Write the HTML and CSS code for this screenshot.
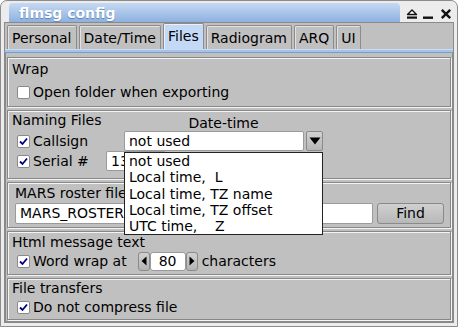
FILE: index.html
```html
<!DOCTYPE html>
<html lang="en">
<head>
    <meta charset="UTF-8">
    <title>flmsg config</title>
    <link rel="stylesheet" href="styles.css">
</head>
<body>
    <div class="window">
        <div class="titlebar">
            <div class="title">flmsg config</div>
            <svg class="wm-btn wm-shade" width="12" height="12" viewBox="0 0 12 12">
                <path d="M1.5 6.5 L6 2 L10.5 6.5 Z" fill="#fff" stroke="#111" stroke-width="1.4" stroke-linejoin="round"/>
                <rect x="1" y="8.5" width="10" height="2.2" fill="#111"/>
            </svg>
            <svg class="wm-btn wm-min" width="12" height="12" viewBox="0 0 12 12">
                <rect x="1" y="8.5" width="10" height="2.4" fill="#111"/>
            </svg>
            <svg class="wm-btn wm-close" width="12" height="12" viewBox="0 0 12 12">
                <path d="M1.8 1.8 L10.2 10.2 M10.2 1.8 L1.8 10.2" stroke="#111" stroke-width="2.4"/>
            </svg>
        </div>

        <div class="client">
            <div class="tabs">
                <div class="tab">Personal</div>
                <div class="tab">Date/Time</div>
                <div class="tab active">Files</div>
                <div class="tab">Radiogram</div>
                <div class="tab">ARQ</div>
                <div class="tab">UI</div>
            </div>
            <div class="tab-rule"></div>

            <div class="panel">
                <div class="group g-wrap">
                    <div class="legend">Wrap</div>
                    <div class="check-row">
                        <span class="box"></span>Open folder when exporting
                    </div>
                </div>

                <div class="group g-naming">
                    <div class="nf-left">
                        <div class="legend">Naming Files</div>
                        <div class="check-row nf-row">
                            <span class="box checked"><svg width="11" height="11" viewBox="0 0 11 11"><path d="M2 5.5 L4.5 8 L9 2.5" fill="none" stroke="#000080" stroke-width="1.8"/></svg></span>Callsign
                        </div>
                        <div class="check-row nf-row">
                            <span class="box checked"><svg width="11" height="11" viewBox="0 0 11 11"><path d="M2 5.5 L4.5 8 L9 2.5" fill="none" stroke="#000080" stroke-width="1.8"/></svg></span><span class="serial-label">Serial #</span>
                            <div class="field serial">13</div>
                        </div>
                    </div>
                    <div class="nf-right">
                        <div class="dt-label">Date-time</div>
                        <div class="combo">
                            <div class="field combo-input">not used</div>
                            <div class="combo-btn">
                                <svg width="12" height="8" viewBox="0 0 12 8"><path d="M0.5 0.5 L11.5 0.5 L6 7.5 Z" fill="#000"/></svg>
                            </div>
                        </div>
                    </div>
                </div>

                <div class="group g-mars">
                    <div class="legend mars-label">MARS roster file</div>
                    <div class="mars-row">
                        <div class="field mars-input">MARS_ROSTER.csv</div>
                        <div class="button find">Find</div>
                    </div>
                </div>

                <div class="group g-html">
                    <div class="legend">Html message text</div>
                    <div class="check-row">
                        <span class="box checked"><svg width="11" height="11" viewBox="0 0 11 11"><path d="M2 5.5 L4.5 8 L9 2.5" fill="none" stroke="#000080" stroke-width="1.8"/></svg></span>Word wrap at
                        <div class="spinner">
                            <div class="spin-btn"><svg width="6" height="10" viewBox="0 0 6 10"><path d="M5.5 0.5 L5.5 9.5 L0.5 5 Z" fill="#000"/></svg></div>
                            <div class="field spin-input">80</div>
                            <div class="spin-btn"><svg width="6" height="10" viewBox="0 0 6 10"><path d="M0.5 0.5 L0.5 9.5 L5.5 5 Z" fill="#000"/></svg></div>
                        </div>
                        <span class="chars">characters</span>
                    </div>
                </div>

                <div class="group g-files">
                    <div class="legend">File transfers</div>
                    <div class="check-row">
                        <span class="box checked"><svg width="11" height="11" viewBox="0 0 11 11"><path d="M2 5.5 L4.5 8 L9 2.5" fill="none" stroke="#000080" stroke-width="1.8"/></svg></span>Do not compress file
                    </div>
                </div>
            </div>
        </div>

        <!-- open choice list of the Date-time combo -->
        <div class="popup">
            <div class="item">not used</div>
            <div class="item">Local time,&nbsp; L</div>
            <div class="item">Local time, TZ name</div>
            <div class="item">Local time, TZ offset</div>
            <div class="item">UTC time,&nbsp;&nbsp;&nbsp; Z</div>
        </div>
    </div>
</body>
</html>
```

FILE: styles.css
```css
body {
    margin: 0;
    font-family: "DejaVu Sans", "Liberation Sans", sans-serif;
    font-size: 14px;
    color: #000;
    background: #fff;
}

.window {
    position: relative;
    width: 458px;
    height: 327px;
    box-sizing: border-box;
    border: 1px solid #8c8c8c;
    border-radius: 7px 7px 0 0;
    background: #ececec;
    padding: 0 3px 3px;
}

.titlebar {
    display: flex;
    align-items: flex-start;
    height: 21px;
}

.title {
    margin: 2px 0 0 5px;
    width: 391px;
    height: 19px;
    box-sizing: border-box;
    padding: 1px 0 0 10px;
    background: linear-gradient(#c6d9f3, #8eb1e1);
    border-radius: 4px 4px 0 0;
    color: #fff;
    font-weight: bold;
    line-height: 18px;
    text-shadow: 0 1px 1px #5f80b0;
}

.wm-btn {
    margin-top: 7px;
}

.wm-shade {
    margin-left: 6px;
}

.wm-min {
    margin-left: 4px;
}

.wm-close {
    margin-left: 6px;
}

.client {
    height: 301px;
    box-sizing: border-box;
    border: 1px solid #8a8a8a;
    background: #c0c0c0;
}

.tabs {
    display: flex;
    align-items: flex-end;
    height: 24px;
    margin: 2px 0 0 2px;
}

.tab {
    height: 24px;
    box-sizing: border-box;
    padding: 0 4px;
    margin-right: 2px;
    border: 1px solid #8c8c8c;
    border-bottom: none;
    border-radius: 2px 2px 0 0;
    box-shadow: inset 1px 1px 0 #e2e2e2;
    line-height: 24px;
    background: #c0c0c0;
}

.tab.active {
    height: 26px;
    line-height: 24px;
    background: #c3d9f5;
    box-shadow: inset 1px 1px 0 #e8f1fc;
}

.tab-rule {
    height: 4px;
    box-sizing: border-box;
    background: #a6c3ea;
    border-top: 1px solid #c9dcf4;
    border-bottom: 1px solid #7d9cc8;
}

.panel {
    height: 269px;
    box-sizing: border-box;
    border: 1px solid #8a8a8a;
    border-top: none;
    padding: 4px 1px 0;
}

.group {
    box-sizing: border-box;
    border: 1px solid #878787;
    box-shadow: inset 1px 1px 0 #f4f4f4, 1px 1px 0 #f4f4f4;
    padding: 0 4px;
    margin-bottom: 3px;
}

.legend {
    line-height: 16px;
    height: 16px;
}

.check-row {
    display: flex;
    align-items: center;
    height: 20px;
    margin-left: 5px;
}

.box {
    display: flex;
    align-items: center;
    justify-content: center;
    width: 13px;
    height: 13px;
    box-sizing: border-box;
    border: 1px solid #8a8a8a;
    border-radius: 2px;
    background: #fff;
    margin-right: 3px;
    flex-shrink: 0;
}

.field {
    box-sizing: border-box;
    background: #fff;
    border: 1px solid #9a9a9a;
    border-radius: 2px;
    padding-left: 4px;
    white-space: nowrap;
    overflow: hidden;
}

.button {
    box-sizing: border-box;
    border: 1px solid #8a8a8a;
    border-radius: 3px;
    background: linear-gradient(#d0d0d0, #b8b8b8);
    text-align: center;
}

/* Wrap */
.g-wrap {
    height: 50px;
    padding-top: 3px;
}

.g-wrap .check-row {
    margin-top: 5px;
}

/* Naming Files */
.g-naming {
    height: 69px;
    display: flex;
    padding-top: 1px;
}

.nf-left {
    width: 112px;
    flex-shrink: 0;
}

.g-naming .legend + .nf-row {
    margin-top: 3px;
}

.serial-label {
    width: 73px;
    flex-shrink: 0;
}

.serial {
    width: 60px;
    height: 20px;
    line-height: 18px;
    flex-shrink: 0;
}

.nf-right {
    width: 199px;
}

.dt-label {
    margin-top: 3px;
    line-height: 16px;
    height: 16px;
    text-align: center;
}

.combo {
    display: flex;
    height: 20px;
}

.combo-input {
    width: 180px;
    line-height: 18px;
}

.combo-btn {
    margin-left: 2px;
    width: 17px;
    box-sizing: border-box;
    border: 1px solid #8a8a8a;
    border-radius: 2px;
    background: linear-gradient(#d2d2d2, #b6b6b6);
    display: flex;
    align-items: center;
    justify-content: center;
}

/* MARS roster file */
.g-mars {
    height: 46px;
    padding-top: 2px;
}

.mars-label {
    margin-left: 3px;
}

.mars-row {
    display: flex;
    margin: 2px 0 0 3px;
    height: 21px;
}

.mars-input {
    width: 358px;
    line-height: 19px;
}

.find {
    width: 67px;
    margin-left: 4px;
    line-height: 19px;
}

/* Html message text */
.g-html {
    height: 44px;
    padding-top: 2px;
}

.g-html .check-row {
    margin-top: 1px;
}

.spinner {
    display: flex;
    height: 19px;
    margin-left: 11px;
}

.spin-btn {
    width: 12px;
    box-sizing: border-box;
    border: 1px solid #8a8a8a;
    border-radius: 3px;
    background: linear-gradient(#d2d2d2, #b4b4b4);
    display: flex;
    align-items: center;
    justify-content: center;
}

.spin-input {
    width: 36px;
    padding-left: 0;
    text-align: center;
    line-height: 17px;
    border-radius: 3px;
}

.chars {
    margin-left: 4px;
}

/* File transfers */
.g-files {
    height: 42px;
    margin-bottom: 0;
    padding-top: 1px;
}

.g-files .check-row {
    margin-top: 1px;
}

.popup {
    position: absolute;
    left: 123px;
    top: 151px;
    width: 199px;
    height: 83px;
    box-sizing: border-box;
    border: 1px solid #222;
    background: #fff;
    padding: 0 0 0 4px;
    z-index: 2;
}

.item {
    line-height: 16.3px;
    white-space: nowrap;
}
```
